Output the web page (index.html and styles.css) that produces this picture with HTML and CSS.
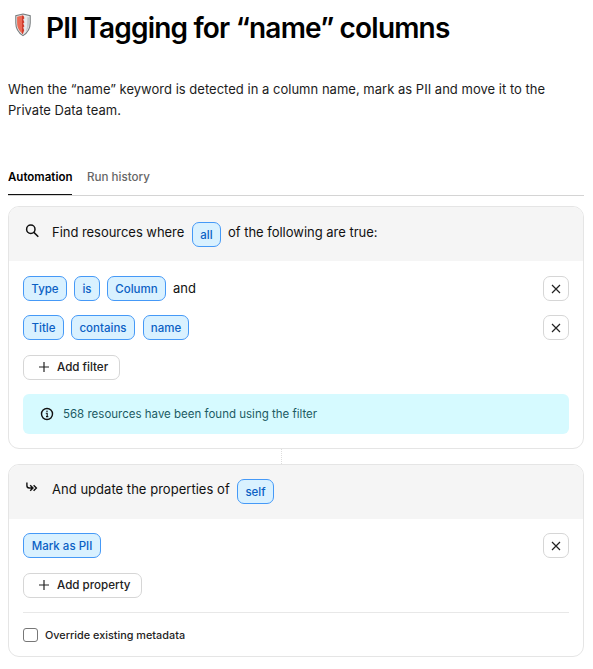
FILE: index.html
```
<!DOCTYPE html>
<html lang="en">
<head>
<meta charset="utf-8">
<title>PII Tagging for “name” columns</title>
<link rel="stylesheet" href="styles.css">
</head>
<body>
<main class="page">
  <header class="title-row">
    <svg class="shield" width="18" height="24" viewBox="0 0 18 24">
      <path d="M9 1 L16.2 2.8 V10 C16.2 16 13.2 20 9 22.6 C4.8 20 1.8 16 1.8 10 V2.8 Z" fill="#e6e9ea" stroke="#777c7e" stroke-width="1.1"/>
      <path d="M9 2.3 V21 C5.5 18.5 3.1 15 3.1 10 V3.8 Z" fill="#ec6a55"/>
      <path d="M8 2.8 H9.6 L10.4 5.3 L9.2 6.5 L10.4 9.3 L9.2 10.5 L10.4 13.3 L9.2 14.5 L10.2 17.3 L9 20.8 H8 Z" fill="#cf3b2c"/>
      <path d="M13.4 4 L15 4.6 V10 C15 14 13.8 17 11.8 19 L13 14 Z" fill="#c3c9cb"/>
    </svg>
    <h1>PII Tagging for “name” columns</h1>
  </header>
  <p class="description">When the “name” keyword is detected in a column name, mark as PII and move it to the Private Data team.</p>
  <nav class="tabs">
    <a class="tab active">Automation</a>
    <a class="tab">Run history</a>
  </nav>

  <section class="card">
    <div class="card-head">
      <svg class="head-icon" width="14" height="14" viewBox="0 0 14 14" fill="none" stroke="#111" stroke-width="1.5"><circle cx="5.8" cy="5.3" r="4.2"/><path d="M8.9 8.4 L13.3 12.8"/></svg>
      <span class="head-text find">Find resources where</span>
      <span class="chip low all">all</span>
      <span class="head-text following">of the following are true:</span>
    </div>
    <div class="card-body">
      <div class="row">
        <span class="chip type">Type</span><span class="chip is">is</span><span class="chip column">Column</span><span class="and">and</span>
        <button class="remove" aria-label="Remove"><svg width="10" height="10" viewBox="0 0 10 10"><path d="M1 1 L9 9 M9 1 L1 9"/></svg></button>
      </div>
      <div class="row last">
        <span class="chip title">Title</span><span class="chip contains">contains</span><span class="chip name">name</span>
        <button class="remove" aria-label="Remove"><svg width="10" height="10" viewBox="0 0 10 10"><path d="M1 1 L9 9 M9 1 L1 9"/></svg></button>
      </div>
      <button class="add filter"><svg width="10" height="10" viewBox="0 0 10 10"><path d="M5 0 V10 M0 5 H10"/></svg><span>Add filter</span></button>
      <div class="notice">
        <svg width="14" height="14" viewBox="0 0 14 14"><circle cx="7" cy="7" r="5.5" fill="none" stroke="#111" stroke-width="1.4"/><path d="M5.8 6.2 H7.2 V9.5 M6 9.6 H8.3" fill="none" stroke="#111" stroke-width="1.1"/><circle cx="7" cy="4.3" r=".8" fill="#111"/></svg>
        <span>568 resources have been found using the filter</span>
      </div>
    </div>
  </section>

  <div class="connector"></div>

  <section class="card update-card">
    <div class="card-head">
      <svg class="head-icon" width="14" height="14" viewBox="0 0 14 14" fill="none" stroke="#111" stroke-width="1.4"><path d="M1.9 1.5 V4.5 Q1.9 7 4.2 7 H7.4 M5.2 4.2 L8 7 L5.2 9.8 M8.6 4.2 L11.4 7 L8.6 9.8"/></svg>
      <span class="head-text update">And update the properties of</span>
      <span class="chip low self">self</span>
    </div>
    <div class="card-body">
      <div class="row last">
        <span class="chip mark">Mark as PII</span>
        <button class="remove" aria-label="Remove"><svg width="10" height="10" viewBox="0 0 10 10"><path d="M1 1 L9 9 M9 1 L1 9"/></svg></button>
      </div>
      <button class="add property"><svg width="10" height="10" viewBox="0 0 10 10"><path d="M5 0 V10 M0 5 H10"/></svg><span>Add property</span></button>
      <label class="override"><input type="checkbox"><span>Override existing metadata</span></label>
    </div>
  </section>
</main>
</body>
</html>
```
FILE: styles.css
```
* { box-sizing: border-box; }
body {
  margin: 0;
  background: #fff;
  color: #111;
  font-family: Inter, "Liberation Sans", sans-serif;
  font-size: 13px;
}
.page { width: 576px; margin-left: 8px; overflow: hidden; }
.title-row { display: flex; height: 56px; padding-top: 11px; }
.shield { margin: 2px 0 0 6px; }
h1 {
  margin: 0 0 0 14px;
  font-size: 28px;
  line-height: 34px;
  font-weight: 600;
  color: #000;
  letter-spacing: -0.81px;
  white-space: nowrap;
}
.description { margin: 23px 0 0; height: 42px; line-height: 21px; color: #1c1c1c; letter-spacing: 0.015px; }
.tabs { display: flex; gap: 15px; height: 29px; margin-top: 46px; border-bottom: 1px solid #d4d4d4; }
.tab { height: 28px; line-height: 20px; font-size: 11.6px; font-weight: 500; color: #666; white-space: nowrap; }
.tab.active { width: 64px; color: #000; border-bottom: 1px solid #111; font-size: 11.5px; font-weight: 600; }
.card { margin-top: 10px; border: 1px solid #e5e5e5; border-radius: 11px; overflow: hidden; }
.card-head { display: flex; align-items: flex-start; height: 54px; padding: 15px 14px 0 16px; background: #f5f5f5; }
.head-icon { flex: none; margin: 2px 13px 0 0; }
.head-text { line-height: 21px; color: #111; white-space: nowrap; }
.find { width: 132px; letter-spacing: -0.04px; }
.following { letter-spacing: -0.02px; }
.update { width: 177px; letter-spacing: 0.03px; }
.card-body { padding: 15px 14px 14px; }
.row { display: flex; align-items: center; gap: 7px; height: 25px; margin-bottom: 14px; }
.row.last { margin-bottom: 15px; }
.and { line-height: 21px; margin-top: -1px; }
.chip {
  display: inline-flex;
  align-items: center;
  justify-content: center;
  flex: none;
  height: 25px;
  border: 1px solid #4599f7;
  border-radius: 7px;
  background: #d9f1ff;
  color: #0b60c4;
  font-size: 11.5px;
  font-weight: 500;
  white-space: nowrap;
}
.type { width: 44px; }
.is { width: 26px; }
.column { width: 59px; }
.title { width: 41px; }
.contains { width: 64px; }
.name { width: 46px; margin-left: 1px; }
.all { width: 29px; margin: 0 7px 0 8px; }
.self { width: 37px; margin-left: 8px; }
.mark { width: 78px; }
.remove {
  display: flex;
  align-items: center;
  justify-content: center;
  width: 26px;
  height: 25px;
  margin-left: auto;
  padding: 0;
  border: 1px solid #d6d6d6;
  border-radius: 7px;
  background: #fff;
}
.remove path, .add path { fill: none; stroke: #222; stroke-width: 1.2; }
.add {
  display: flex;
  align-items: center;
  gap: 8px;
  height: 25px;
  padding: 0 0 1px 15px;
  border: 1px solid #d6d6d6;
  border-radius: 7px;
  background: #fff;
  color: #222;
  font: 500 11.6px Inter, "Liberation Sans", sans-serif;
  white-space: nowrap;
}
.filter { width: 97px; }
.property { width: 119px; }
.notice {
  display: flex;
  align-items: center;
  gap: 9px;
  height: 40px;
  margin-top: 14px;
  padding-left: 17px;
  border-radius: 6px;
  background: #d6faff;
  color: #1c5a64;
  font-size: 11.5px;
}
.connector { width: 1px; height: 15px; margin-left: 273px; border-left: 1px dotted #ddd; }
.update-card { margin-top: 0; }
.update-card .card-head { padding-top: 14px; }
.update-card .card-body { padding: 14px 14px 13px; }
.override {
  display: flex;
  align-items: center;
  gap: 7px;
  height: 31px;
  margin-top: 14px;
  padding-top: 14px;
  border-top: 1px solid #e8e8e8;
  font-size: 10.85px;
  font-weight: 500;
  color: #222;
}
.override input { appearance: none; width: 15px; height: 14px; margin: 0; border: 1px solid #777; border-radius: 3px; }
```
